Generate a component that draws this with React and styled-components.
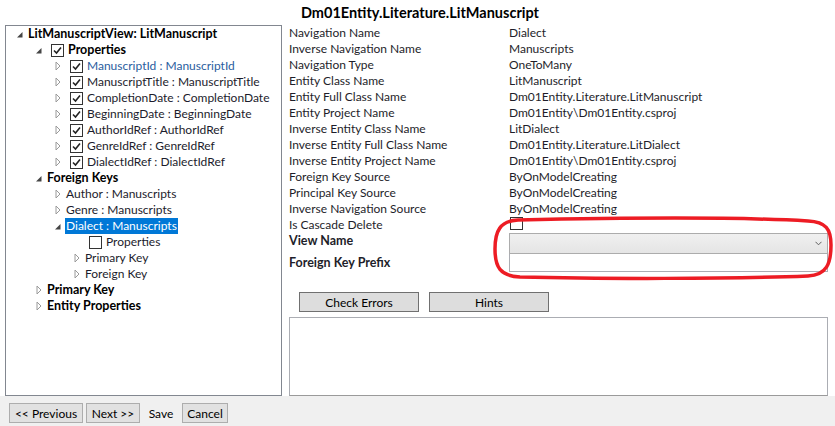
import React from "react";
import styled, { createGlobalStyle } from "styled-components";

const Global = createGlobalStyle`
  html, body { margin: 0; padding: 0; background: #ffffff; }
  body { font-family: Lato, "Noto Sans", sans-serif; font-size: 12px; color: #1e1e1e; }
  * { box-sizing: border-box; }
`;

const Window = styled.div`
  position: relative;
  width: 835px;
  height: 426px;
  display: flex;
  flex-direction: column;
  background: #ffffff;
  overflow: hidden;
`;

const Title = styled.div`
  height: 25px;
  line-height: 25px;
  padding-left: 5px;
  text-align: center;
  font-weight: 700;
  font-size: 14.5px;
  color: #000;
`;

const Main = styled.div`
  height: 371px;
  display: flex;
  padding-left: 5px;
`;

const Tree = styled.div`
  width: 277px;
  height: 371px;
  border: 1px solid #828790;
  display: flex;
  flex-direction: column;
`;

const Row = styled.div`
  height: 16px;
  display: flex;
  align-items: center;
  padding-left: ${(p) => 10 + p.$level * 19}px;
  white-space: nowrap;
`;

const ExpanderSlot = styled.span`
  width: 12px;
  height: 16px;
  display: flex;
  align-items: center;
  flex: none;
`;

const Box = styled.span`
  width: 13px;
  height: 13px;
  border: 1px solid #333333;
  background: #fff;
  margin: 0 4px;
  display: inline-flex;
  align-items: center;
  justify-content: center;
  flex: none;
`;

const NodeText = styled.span`
  font-weight: ${(p) => (p.$bold ? 700 : 400)};
  font-size: ${(p) => (p.$bold ? "12.5px" : "12px")};
  color: ${(p) => (p.$selected ? "#ffffff" : p.$color || "#1c1c2c")};
  background: ${(p) => (p.$selected ? "#0078d7" : "transparent")};
  padding: 0 1px;
  margin-left: -1px;
  line-height: 16px;
`;

const Right = styled.div`
  position: relative;
  width: 539px;
  margin-left: 7px;
  display: flex;
  flex-direction: column;
`;

const Grid = styled.div`
  display: grid;
  grid-template-columns: 220px 1fr;
  grid-auto-rows: 16px;
  line-height: 16px;
`;

const Label = styled.div`
  color: #1e1e2a;
  font-weight: ${(p) => (p.$bold ? 700 : 400)};
  font-size: ${(p) => (p.$bold ? "12.5px" : "12px")};
  line-height: 16px;
  white-space: nowrap;
`;

const Value = styled.div`
  color: #1e1e2a;
  white-space: nowrap;
  display: flex;
  align-items: ${(p) => (p.$top ? "flex-start" : "center")};
`;

const SmallBox = styled.span`
  width: 13px;
  height: 13px;
  border: 1px solid #333;
  background: #fff;
  margin-left: 1px;
`;

const EditRow = styled.div`
  display: grid;
  grid-template-columns: 220px 1fr;
  height: ${(p) => p.$h}px;
  align-items: ${(p) => p.$align || "center"};
`;

const Combo = styled.div`
  height: 21px;
  border: 1px solid #acacac;
  background: linear-gradient(#f0f0f0, #e5e5e5);
  display: flex;
  align-items: center;
  justify-content: flex-end;
  padding-right: 5px;
`;

const TextBox = styled.div`
  height: 18px;
  border: 1px solid #abadb3;
  border-top: none;
  background: #fff;
`;

const ButtonRow = styled.div`
  display: flex;
  gap: 10px;
  padding-left: 10px;
  margin-top: 20px;
`;

const ActionButton = styled.button`
  width: 120px;
  height: 20px;
  border: 1px solid #707070;
  background: #dddddd;
  font-family: inherit;
  font-size: 12px;
  color: #000;
  padding: 0;
`;

const Output = styled.div`
  margin-top: 5px;
  flex: 1;
  border: 1px solid #abadb3;
  border-bottom-color: #9a9a9a;
  background: #fff;
`;

const Footer = styled.div`
  height: 30px;
  background: #f0f0f0;
  display: flex;
  align-items: flex-start;
  padding: 7px 0 0 9px;
  gap: 3px;
`;

const NavButton = styled.button`
  height: 20px;
  width: ${(p) => p.$w}px;
  border: 1px solid ${(p) => (p.$flat ? "transparent" : "#adadad")};
  background: ${(p) => (p.$flat ? "transparent" : "#e1e1e1")};
  font-family: inherit;
  font-size: 12px;
  color: #000;
  padding: 0;
`;

const Annotation = styled.svg`
  position: absolute;
  left: 490px;
  top: 215px;
  pointer-events: none;
`;

const Collapsed = () => (
  <svg width="7" height="10" viewBox="0 0 7 10" style={{ marginLeft: 1 }}>
    <path d="M1 1 L5 5 L1 9 Z" fill="none" stroke="#9a9a9a" strokeWidth="1" />
  </svg>
);

const Expanded = () => (
  <svg width="8" height="8" viewBox="0 0 8 8" style={{ marginTop: 1 }}>
    <path d="M6.5 1 L6.5 6.5 L1 6.5 Z" fill="#454545" />
  </svg>
);

const Check = () => (
  <svg width="11" height="11" viewBox="0 0 11 11">
    <path d="M2 5.5 L4.5 8 L9 2.5" fill="none" stroke="#222" strokeWidth="1.6" />
  </svg>
);

const Chevron = () => (
  <svg width="7" height="5" viewBox="0 0 7 5">
    <path d="M0.5 0.8 L3.5 3.8 L6.5 0.8" fill="none" stroke="#606060" strokeWidth="1" />
  </svg>
);

const nodes = [
  { level: 0, exp: "open", text: "LitManuscriptView: LitManuscript", bold: true, color: "#000" },
  { level: 1, exp: "open", check: true, text: "Properties", bold: true, color: "#000" },
  { level: 2, exp: "closed", check: true, text: "ManuscriptId : ManuscriptId", color: "#2a5d9e" },
  { level: 2, exp: "closed", check: true, text: "ManuscriptTitle : ManuscriptTitle" },
  { level: 2, exp: "closed", check: true, text: "CompletionDate : CompletionDate" },
  { level: 2, exp: "closed", check: true, text: "BeginningDate : BeginningDate" },
  { level: 2, exp: "closed", check: true, text: "AuthorIdRef : AuthorIdRef" },
  { level: 2, exp: "closed", check: true, text: "GenreIdRef : GenreIdRef" },
  { level: 2, exp: "closed", check: true, text: "DialectIdRef : DialectIdRef" },
  { level: 1, exp: "open", text: "Foreign Keys", bold: true, color: "#000" },
  { level: 2, exp: "closed", text: "Author : Manuscripts" },
  { level: 2, exp: "closed", text: "Genre : Manuscripts" },
  { level: 2, exp: "open", text: "Dialect : Manuscripts", selected: true },
  { level: 3, exp: null, check: false, text: "Properties" },
  { level: 3, exp: "closed", text: "Primary Key" },
  { level: 3, exp: "closed", text: "Foreign Key" },
  { level: 1, exp: "closed", text: "Primary Key", bold: true, color: "#000" },
  { level: 1, exp: "closed", text: "Entity Properties", bold: true, color: "#000" },
];

const props = [
  ["Navigation Name", "Dialect"],
  ["Inverse Navigation Name", "Manuscripts"],
  ["Navigation Type", "OneToMany"],
  ["Entity Class Name", "LitManuscript"],
  ["Entity Full Class Name", "Dm01Entity.Literature.LitManuscript"],
  ["Entity Project Name", "Dm01Entity\\Dm01Entity.csproj"],
  ["Inverse Entity Class Name", "LitDialect"],
  ["Inverse Entity Full Class Name", "Dm01Entity.Literature.LitDialect"],
  ["Inverse Entity Project Name", "Dm01Entity\\Dm01Entity.csproj"],
  ["Foreign Key Source", "ByOnModelCreating"],
  ["Principal Key Source", "ByOnModelCreating"],
  ["Inverse Navigation Source", "ByOnModelCreating"],
];

export default function App() {
  return (
    <>
      <Global />
      <Window>
        <Title>Dm01Entity.Literature.LitManuscript</Title>
        <Main>
          <Tree>
            {nodes.map((n, i) => (
              <Row key={i} $level={n.level}>
                <ExpanderSlot>
                  {n.exp === "open" && <Expanded />}
                  {n.exp === "closed" && <Collapsed />}
                </ExpanderSlot>
                {n.check !== undefined && <Box>{n.check && <Check />}</Box>}
                <NodeText $bold={n.bold} $selected={n.selected} $color={n.color}>
                  {n.text}
                </NodeText>
              </Row>
            ))}
          </Tree>
          <Right>
            <Grid>
              {props.map(([l, v]) => (
                <React.Fragment key={l}>
                  <Label>{l}</Label>
                  <Value>{v}</Value>
                </React.Fragment>
              ))}
              <Label>Is Cascade Delete</Label>
              <Value $top>
                <SmallBox />
              </Value>
            </Grid>
            <EditRow $h={21} $align="start">
              <Label $bold>View Name</Label>
              <Combo>
                <Chevron />
              </Combo>
            </EditRow>
            <EditRow $h={18}>
              <Label $bold>Foreign Key Prefix</Label>
              <TextBox />
            </EditRow>
            <ButtonRow>
              <ActionButton>Check Errors</ActionButton>
              <ActionButton>Hints</ActionButton>
            </ButtonRow>
            <Output />
          </Right>
        </Main>
        <Footer>
          <NavButton $w={74}>&lt;&lt; Previous</NavButton>
          <NavButton $w={54}>Next &gt;&gt;</NavButton>
          <NavButton $w={36} $flat>Save</NavButton>
          <NavButton $w={46}>Cancel</NavButton>
        </Footer>
        <Annotation width="345" height="68" viewBox="0 0 345 68">
          <path
            d="M28 5 C120 3 250 2 318 6 C336 7 341 14 341 30 C341 48 337 60 318 61 C240 64 110 64 30 62 C10 61 5 52 5 34 C5 16 10 6 28 5 Z"
            fill="none"
            stroke="#ed1c24"
            strokeWidth="3.5"
          />
        </Annotation>
      </Window>
    </>
  );
}
